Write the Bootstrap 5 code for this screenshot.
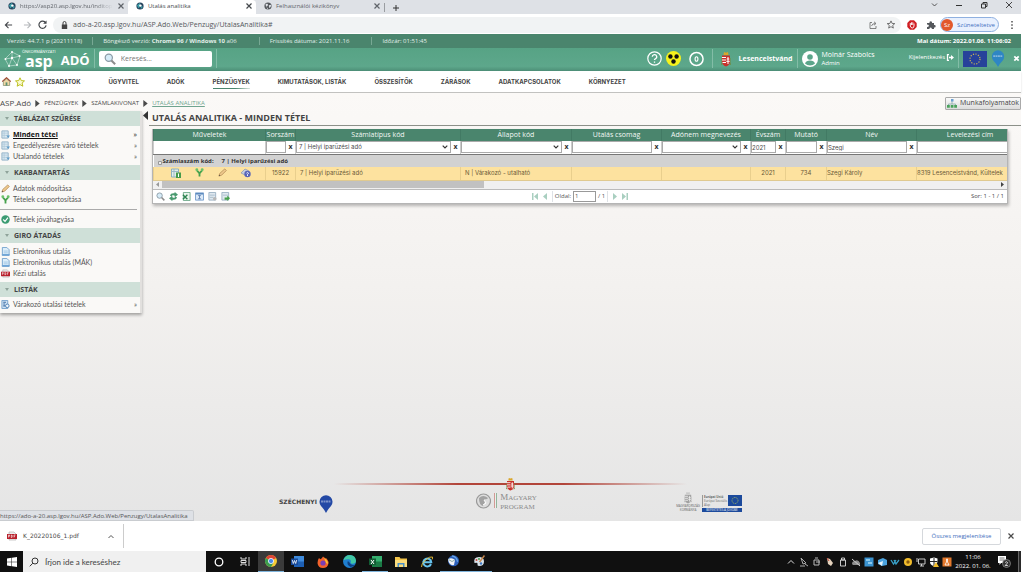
<!DOCTYPE html>
<html lang="hu">
<head>
<meta charset="utf-8">
<meta name="viewport" content="width=device-width, initial-scale=1">
<title>Utalás analitika</title>
<link href="https://cdn.jsdelivr.net/npm/bootstrap@5.3.0/dist/css/bootstrap.min.css" rel="stylesheet">
<script src="https://cdn.jsdelivr.net/npm/bootstrap@5.3.0/dist/js/bootstrap.bundle.min.js" defer></script>
<style>
body{font:6px/8px "Open Sans","Noto Sans",sans-serif;color:#4a4a4a;min-height:100vh;padding:0 3px 4px 0;background:#fff}
a{color:inherit;text-decoration:none}
button{border:0;background:none;padding:0;color:inherit;font:inherit;display:inline-flex;align-items:center;justify-content:center}
input,select{font:inherit;color:inherit;min-width:0;border-radius:0}
svg{display:block;flex:none}
.fs-7px{font-size:7px}
.fs-8px{font-size:8px}
/* browser chrome */
.tabstrip{height:14px;background:#dee1e6;padding-right:8px}
.brtab{width:128px;height:14px;padding:0 3px 3px 8px;color:#60646a;gap:4px}
.brtab .ttl{flex:1;white-space:nowrap}
.brtab.on{background:#fff;color:#45494d;border-radius:4px 4px 0 0}
.fade-end{-webkit-mask-image:linear-gradient(90deg,#000 80%,transparent)}
.newtab{border-left:1px solid #9a9da1;height:9px;width:23px;margin-top:1px}
.winbtns{gap:17px;padding-bottom:5px}
.toolbar-row{height:20px;padding:1px 6px 0 4px;gap:6px}
.omni{background:#f1f3f4;height:16px;border-radius:8px;padding:0 5px 0 8px;gap:5px}
.omni input{border:0;background:none;font-size:7px;padding:0;outline:0;color:#55585c}
.profile{border:1px solid #8fb0e0;background:#e8f0fe;border-radius:8px;height:15px;width:59px;color:#3f6fbe;gap:4px;padding-right:3px;margin-left:-2px}
.profile .av{width:12px;height:12px;border-radius:50%;background:#e2582c;color:#fff;line-height:12px}
/* application header */
.verbar{height:14px;background:#4a856d;color:#e2eee9;padding:0 10px 0 7px}
.verbar span+span{border-left:1px solid #78a894;margin-left:22px;padding-left:10px}
.verbar span:first-child{margin-right:-12px}
.brandbar{height:23px;background:linear-gradient(#57a385,#5da78b 80%,#4d8f77);color:#fff;padding:0 1px 2px 4px}
.vr-line{border-left:1px solid #83bda7;height:19px}
.logo-asp{font-weight:700;font-size:16px;line-height:14px}
.logo-asp small{display:block;font:4px/4px "Open Sans",sans-serif;margin-left:-3px;width:30px;white-space:nowrap}
.logo-ado{font-weight:700;font-size:13px;line-height:15px;padding-top:3px}
.srch{background:#fff;width:113px;height:16px;border-radius:2px;padding-left:5px;gap:5px}
.srch input{border:0;outline:0;padding:0;font-size:7px;width:80px}
input::placeholder{color:#777}
.logout{gap:1px;margin:5px 0 0 34px}
.menubar{height:22px;background:#fff;border-bottom:1px solid #c2c2c0;box-shadow:0 1px 2px #0002;position:relative;font:700 6px/8px Inter,"Open Sans",sans-serif;color:#444;padding:0 2px;gap:28px}
.menubar a{line-height:14px;padding-top:1px}
.menubar a.cur{background:linear-gradient(90deg,#4a856d,#4a856d 60%,#4a856d33) bottom/100% 1px no-repeat}
.quick{margin-right:-18px}
.zone{background:linear-gradient(#fbf9f7,#f3f1ef 45%,#e5e5e5);min-height:300px}
.crumbs{height:18px;padding-top:2px;gap:4px}
.crumbs .here{color:#6fa48f;text-decoration:underline}
.wf-btn{border:1px solid #aaa;background:linear-gradient(#fafafa,#dcdcdc);border-radius:1px;height:13px;width:76px;font-size:7px;color:#444;gap:3px}
/* side menu */
.side{width:142px;background:#faf9f7;border-right:2px solid #e2e0de;box-shadow:0 2px 3px #0005;padding-bottom:2px}
.side h2{font-size:7px;line-height:15px;font-weight:700;margin:0;background:#cfe0d8;padding-left:14px;position:relative;color:#444}
.side h2::before{content:"";position:absolute;left:5px;top:6px;border:2px solid transparent;border-top:3px solid #8fa39a}
.side ul{list-style:none;margin:0;padding:3px 0}
.side li a{display:flex;align-items:center;height:11px;gap:3px;padding:0 3px 0 1px;font:7px/11px Lato,sans-serif;color:#555}
.side li i{margin-left:auto;font-style:normal;font-weight:400}
.side li.sel a{font:700 7px/11px "Open Sans",sans-serif;color:#111}
.side hr{margin:4px 3px 4px 0;border-top:1px solid #aaa;opacity:1}
.side ul:last-child{padding:2px 0 1px}
.side-toggle{width:7px;flex:none}
.ptitle{font-size:9px;line-height:14px;font-weight:700;border-bottom:1px solid #8c9089;margin:0;padding-left:3px;color:#444}
/* data grid */
.gridbox{margin:3px 13px 0 3px;border:1px solid #b5b5b5;border-width:0 1px 1px;box-shadow:1px 2px 3px #0004;background:#fff}
.datagrid{table-layout:fixed;width:100%;border-collapse:collapse;font-family:Inter,"Open Sans",sans-serif}
.datagrid th,.datagrid td{padding:0;white-space:nowrap;overflow:hidden}
.datagrid thead th{background:#4a856d;color:#f3f8f5;font:7px/12px "Open Sans",sans-serif;text-align:center;border-left:1px solid #427a64}
.c-ops{width:112px}.c-seq{width:30px}.c-type{width:165px}.c-state{width:111px}.c-pack{width:90px}.c-tax{width:89px}.c-year{width:35px}.c-idx{width:41px}.c-name{width:90px}
.filters td{height:13px;border-left:1px solid #ccc;border-bottom:1px solid #777}
.filters input,.filters select{flex:1;height:12px;border:1px solid #aaa;padding:0 2px;background-color:#fff;width:10px;outline:0}
.filters input{padding:0}
.filters select{appearance:none;background:#fff url("data:image/svg+xml,%3Csvg xmlns='http://www.w3.org/2000/svg' viewBox='0 0 6 4'%3E%3Cpath d='M.7.7 3 3 5.300.7' fill='none' stroke='%23333' stroke-width='1.200'/%3E%3C/svg%3E") right 2px center/6px 4px no-repeat}
.filters button{width:9px;font:700 7px/10px "Open Sans",sans-serif;color:#333}
.grp td{background:#d2d2d2;height:13px;font:700 6px/12px "Open Sans",sans-serif;padding-left:9px;color:#333}
.rowsel td{background:#fde29f;height:13px;border-left:1px solid #e9cf8d;border-bottom:1px solid #e0ca90;color:#6b5a38}
.rowact{gap:14px;padding-left:17px}
.hscroll{height:9px;background:#f0f0f0;padding:1px 3px;border-bottom:1px solid #bbb;gap:3px}
.hscroll div{background:#c1c1c1;height:7px}
.pager{display:grid;grid-template-columns:1fr auto 1fr;align-items:center;height:13px;padding:0 3px}
.pager input{width:23px;height:11px;border:1px solid #999;padding:0 1px}
.pager-nav{gap:5px;color:#555}
.pager-nav label{gap:2px;padding:0 2px}
/* page footer */
.foot-in{width:463px;max-width:100%;height:32px;padding-top:2px}
.tri-line{height:2px;width:353px;background:linear-gradient(90deg,transparent,#b2453a 35%,#b2453a 65%,transparent)}
.szechenyi{gap:2px;font:700 6px/8px "DejaVu Sans",sans-serif;color:#444}
.magyary{gap:3px;color:#8b8b8b;padding:2px 0 0 4px;font:9px/8px "Liberation Serif",serif}
.magyary i{width:3px;height:15px;background:linear-gradient(90deg,#d29a94 33%,#eee 33% 66%,#93b59b 66%)}
.eufund{gap:2px;font:3px/4px "Open Sans",sans-serif;color:#666}
.eufund .aid{border-left:1px solid #999;padding-left:1px;white-space:nowrap;width:24px}
.eufund .motto{background:#1c4a9c;color:#fff;text-align:center;width:40px;margin-top:1px}
.statusurl{position:absolute;left:0;bottom:0;background:#dee1e6;border:1px solid #c9ccd0;border-left:0;border-radius:0 2px 0 0;height:11px;padding-right:5px;color:#555;line-height:10px}
/* download bar and taskbar */
.dlbar{height:30px;background:#fff;padding-right:6px;gap:6px}
.dlitem{width:124px;height:24px;border-right:1px solid #ccc;padding:0 9px 0 7px;gap:6px;font-family:"DejaVu Sans",sans-serif}
.showall{border:1px solid #d5d8dc;border-radius:2px;width:79px;height:17px;color:#3f6fbe}
.taskbar{height:21px;background:#101010;color:#fff}
.start{width:23px}
.tsearch{background:#f0f0f0;width:183px;height:21px;padding-left:6px;gap:6px;color:#444}
.tsearch input{border:0;background:none;outline:0;font:8px/10px Lato,sans-serif;padding:0;flex:1}
.tsearch input::placeholder{color:#444}
.tapp{width:26px;height:21px}
.tapp.run{border-bottom:1px solid #7fb4dc}
.tapp.act{background:#3a3a3a;border-bottom:1px solid #7fb4dc}
.tray{gap:3px}
.clock{width:42px;text-align:center;line-height:9px}
.notif{width:20px;margin-right:4px}
.peek{width:3px;height:21px;background:#2a2a2a;border-left:1px solid #666}
</style>
</head>
<body class="d-flex flex-column">
<svg width="0" height="0" class="position-absolute" aria-hidden="true">
<symbol id="x" viewBox="0 0 8 8"><path d="M1.500 1.500l5 5m0-5l-5 5" stroke="currentColor" stroke-width="1.200"/></symbol>
<symbol id="fav" viewBox="0 0 10 10"><circle cx="5" cy="5" r="4.500" fill="#27425c"/><path d="M1 4l4-3 1 4-3 3zM6 5l3 1-3 3" fill="#3a9aa5"/><circle cx="5.500" cy="4.500" r="1.500" fill="#fff"/></symbol>
<symbol id="globe" viewBox="0 0 10 10"><circle cx="5" cy="5" r="4.500" fill="#55595e"/><path d="M2 2.500q3-1 3 1T2.500 6zM6 4l3-.5q0 3-2.500 4zM3 7l2 .5v1.500" fill="#dee1e6"/></symbol>
<symbol id="crest" viewBox="0 0 10 16"><path d="M2.500 4L3 1l2 .8L7 1l.5 3z" fill="#d9a62b"/><path d="M1 4.500h8v6q0 3.500-4 5-4-1.500-4-5z" fill="#c8312b"/><path d="M1 6.500h4M1 9h4M1.500 11.500H5" stroke="#fff"/><path d="M7 6v7M5.700 8h2.600M5.300 10.300h3.400" stroke="#fff"/><path d="M0 7v5l1 2M10 7v5l-1 2" stroke="#6f8a42" fill="none"/></symbol>
<symbol id="pin" viewBox="0 0 14 18"><path d="M7 18Q5 14 2 11A6.500 6.500 0 1 1 12 11Q9 14 7 18z"/><path d="M2 6.500h10" stroke="#fff" stroke-width="2" stroke-dasharray="2 .5" opacity=".4"/></symbol>
<symbol id="eu" viewBox="0 0 24 16"><path d="M0 0h24v16H0z" fill="#27429a"/><circle cx="12" cy="8" r="5" fill="none" stroke="#c9b854" stroke-width="1.200" stroke-dasharray="1.200 1.400"/></symbol>
<symbol id="sheet" viewBox="0 0 10 10"><path d="M1 1h7v8H1z" fill="#d9e8f2" stroke="#8fb0c6"/><path d="M1 3.500h7M1 6h7M3.500 1v8" stroke="#a9c4d6" stroke-width=".7"/><path d="M6 6h4L8 9z" fill="#5f9bc8"/></symbol>
<symbol id="doc" viewBox="0 0 10 10"><path d="M1.500.500h5l2.500 2.500v6.500h-7.500z" fill="#dceefa" stroke="#6f9fcc"/><path d="M3 4.500h4.500M3 6.500h4.500" stroke="#9dc4e4"/><path d="M1 8.500h8.500" stroke="#6fa6d8" stroke-width="1.500"/></symbol>
<symbol id="pen" viewBox="0 0 10 10"><path d="M1 9l1-3L7.500 1 9.200 2.800 4 8z" fill="#efc98c" stroke="#ae8450" stroke-width=".8"/><path d="M1 9l.5-1.500 1 1z" fill="#444"/></symbol>
<symbol id="fork" viewBox="0 0 10 10"><path d="M5 9.500V6M5 6L2 2.500M5 6l3-3.500" stroke="#45a04c" stroke-width="2" fill="none"/><circle cx="2" cy="2" r="1.600" fill="#6cc36c"/><circle cx="8" cy="2" r="1.600" fill="#6cc36c"/></symbol>
<symbol id="pdf" viewBox="0 0 10 10"><path d="M2 1h5l2 2v6H2z" fill="#eee" stroke="#aaa" stroke-width=".6"/><path d="M0 3h10v5H0z" fill="#b8202c"/><path d="M1.500 6.500V4h1v1.300h-1M4.300 4v2.500h.6q.8-1.200 0-2.500zM7 6.500V4h1.500M7 5.300h1" stroke="#fff" stroke-width=".6" fill="none"/></symbol>
<symbol id="lens" viewBox="0 0 10 10"><circle cx="4" cy="4" r="3" fill="#d6ebf7" stroke="#8a9aa5"/><path d="M6.200 6.200L9.300 9.300" stroke="#8d8d8d" stroke-width="1.700"/></symbol>
<symbol id="tri" viewBox="0 0 5 8"><path d="M0 0l5 4-5 4z" fill="currentColor"/></symbol>
</svg>

<div class="tabstrip d-flex align-items-center">
 <div class="brtab d-flex align-items-center"><svg width="8" height="8"><use href="#fav"/></svg><span class="ttl fade-end">https://asp20.asp.lgov.hu/inditop</span><button aria-label="Bezárás"><svg width="8" height="8"><use href="#x"/></svg></button></div>
 <div class="brtab on d-flex align-items-center"><svg width="8" height="8"><use href="#fav"/></svg><span class="ttl">Utalás analitika</span><button aria-label="Bezárás"><svg width="8" height="8"><use href="#x"/></svg></button></div>
 <div class="brtab d-flex align-items-center"><svg width="8" height="8"><use href="#globe"/></svg><span class="ttl">Felhasználói kézikönyv</span><button aria-label="Bezárás"><svg width="8" height="8"><use href="#x"/></svg></button></div>
 <button class="newtab" aria-label="Új lap"><svg width="8" height="8" viewBox="0 0 8 8"><path d="M4 1v6M1 4h6" stroke="#333"/></svg></button>
 <div class="winbtns d-flex ms-auto">
  <svg width="7" height="8" viewBox="0 0 7 8"><path d="M1 2.500l2.500 2.500L6 2.500" fill="none" stroke="#444" stroke-width=".9"/></svg>
  <svg width="8" height="8" viewBox="0 0 8 8"><path d="M1 4.500h6" stroke="#333"/></svg>
  <svg width="8" height="8" viewBox="0 0 8 8"><path d="M1.500 3h4v4h-4zM3 3V1.500h4v4H5.500" fill="none" stroke="#333"/></svg>
  <svg width="8" height="8" viewBox="0 0 8 8"><path d="M1 1l6 6m0-6L1 7" stroke="#333" stroke-width=".9"/></svg>
 </div>
</div>

<div class="toolbar-row d-flex align-items-center">
 <button class="me-1" aria-label="Vissza"><svg width="9" height="10" viewBox="0 0 10 10"><path d="M9 5H1.500M5 1.500L1.500 5 5 8.500" stroke="#44474b" stroke-width="1.200" fill="none"/></svg></button>
 <button aria-label="Előre"><svg width="9" height="10" viewBox="0 0 10 10"><path d="M1 5h7.500M5 1.500L8.500 5 5 8.500" stroke="#b5b8bb" stroke-width="1.200" fill="none"/></svg></button>
 <button aria-label="Frissítés"><svg width="9" height="9" viewBox="0 0 10 10"><path d="M8.500 3.200A4 4 0 1 0 9 6" stroke="#44474b" stroke-width="1.300" fill="none"/><path d="M9.500.500v3.800H5.700z" fill="#44474b"/></svg></button>
 <div class="omni d-flex align-items-center flex-grow-1"><svg width="7" height="8" viewBox="0 0 7 8"><path d="M.8 3.500h5.400V8H.8z" fill="#444"/><path d="M2 4V2a1.500 1.500 0 0 1 3 0v2" fill="none" stroke="#444"/></svg>
 <input class="flex-grow-1" aria-label="Cím" value="ado-a-20.asp.lgov.hu/ASP.Ado.Web/Penzugy/UtalasAnalitika#">
 <svg class="me-1" width="8" height="8" viewBox="0 0 8 8"><path d="M3 1.500H1v6h6V5M2.500 5q.5-2.500 4-2.500M5 .8l2 1.700-2 1.700" stroke="#666" stroke-width=".8" fill="none"/></svg>
 <svg width="10" height="9" viewBox="0 0 10 10"><path d="M5 1l1.200 2.800 3 .2-2.300 2 .7 3L5 7.400 2.400 9l.7-3L.8 4l3-.2z" fill="none" stroke="#555" stroke-width=".9"/></svg></div>
 <svg class="me-1" width="10" height="10" viewBox="0 0 10 10"><path d="M3 .300h4l2.700 2.700v4L7 9.700H3L.3 7V3z" fill="#d01f24"/><path d="M3.300 3v3q.5 2 2 2T7 6V3.500M4.500 2.300V5M5.800 2.300V5" stroke="#fff" stroke-width=".9" fill="none"/></svg>
 <svg width="9" height="9" viewBox="0 0 9 9"><path d="M0 3h2.500a1.300 1.300 0 1 1 2.500 0H7v2a1.300 1.300 0 1 1 0 2.500V9H4.800a1.200 1.200 0 1 0-2.300 0H0V6.800a1.200 1.200 0 1 0 0-2z" fill="#55585c"/></svg>
 <button class="profile me-1"><span class="av">Sz</span>Szüneteltetve</button>
 <svg width="6" height="10" viewBox="0 0 4 10"><path d="M2 1v1.500M2 4.300v1.500M2 7.600v1.500" stroke="#444" stroke-width="1.400"/></svg>
</div>

<header>
 <div class="verbar d-flex align-items-center"><span>Verzió: 44.7.1 p (20211118)</span><span>Böngésző verzió: <b>Chrome 96 / Windows 10</b> a06</span><span>Frissítés dátuma: 2021.11.16</span><span>Időzár: 01:51:45</span><b class="ms-auto text-white">Mai dátum: 2022.01.06. 11:06:02</b></div>
 <div class="brandbar d-flex align-items-center">
  <svg class="me-1" width="17" height="18" viewBox="0 0 17 18"><path d="M1 9l7-7 8 4-3 9-8 1zM1 9l7-1 8-2M8 2v6l5 7M8 8l-3 8" stroke="#d4eae1" stroke-width=".6" fill="none"/><g fill="#fff"><circle cx="1.500" cy="9" r="1"/><circle cx="8" cy="2" r="1"/><circle cx="8" cy="8" r="1.200"/><circle cx="15.500" cy="6" r="1"/><circle cx="13" cy="15" r="1"/><circle cx="5" cy="16" r="1"/></g></svg>
  <span class="logo-asp me-2"><small>ÖNKORMÁNYZATI</small>asp</span><span class="logo-ado">ADÓ</span>
  <span class="vr-line ms-1 me-1"></span>
  <label class="srch d-flex align-items-center"><svg width="12" height="12"><use href="#lens"/></svg><input placeholder="Keresés..." aria-label="Keresés"></label>
  <span class="vr-line ms-1"></span>
  <svg class="ms-auto me-1" width="15" height="15" viewBox="0 0 15 15"><circle cx="7.500" cy="7.500" r="6.700" fill="none" stroke="#fff" stroke-width="1.200"/><path d="M5.300 5.800a2.200 2.200 0 1 1 3 2q-.8.400-.8 1.300M7.500 10.500v1.300" fill="none" stroke="#fff" stroke-width="1.300"/></svg>
  <svg class="me-2" width="15" height="15" viewBox="0 0 15 15"><circle cx="7.500" cy="7.500" r="7.500" fill="#f6f21c"/><g fill="#111"><circle cx="4.400" cy="5.500" r="2.200"/><circle cx="10.600" cy="5.500" r="2.200"/><circle cx="7.500" cy="10.500" r="2.200"/></g></svg>
  <svg width="15" height="16" viewBox="0 0 16 16"><circle cx="8" cy="8" r="7" fill="none" stroke="#fff" stroke-width="1.600"/><ellipse cx="8" cy="8" rx="1.500" ry="2.400" fill="none" stroke="#fff" stroke-width="1.200"/></svg>
  <span class="vr-line ms-2 me-2"></span>
  <svg width="10" height="16"><use href="#crest"/></svg><b class="ms-2 fs-7px">Lesenceistvánd</b>
  <span class="vr-line ms-1 me-1"></span>
  <svg class="me-1" width="16" height="16" viewBox="0 0 16 16"><circle cx="8" cy="8" r="8" fill="#fff"/><circle cx="8" cy="6" r="2.800" fill="#5ba58a"/><path d="M3 12.500q1-3 5-3t5 3A7 7 0 0 1 3 12.500" fill="#5ba58a"/></svg>
  <span><span class="d-block fs-7px">Molnár Szabolcs</span><span class="d-block">Admin</span></span>
  <a href="#" class="logout d-flex align-items-center align-self-start">Kijelentkezés<svg width="8" height="7" viewBox="0 0 8 7"><path d="M3 .500H1.500v6H3M3 3.500h3.500" stroke="#fff" fill="none" stroke-width="1.300"/><path d="M5 1l3 2.500-3 2.500z" fill="#fff"/></svg></a>
  <span class="vr-line ms-1 me-1"></span>
  <svg width="24" height="16"><use href="#eu"/></svg>
  <svg class="ms-1 me-2" width="14" height="17" fill="#2e86c4"><use href="#pin"/></svg>
  <button aria-label="Bezárás"><svg width="7" height="7" viewBox="0 0 8 8"><path d="M1.500 1.500l5 5m0-5l-5 5" stroke="#fff" stroke-width="2"/></svg></button>
 </div>
 <nav class="menubar d-flex align-items-center">
  <span class="quick d-flex gap-1"><svg width="9" height="9" viewBox="0 0 10 10"><path d="M1.500 5v4.500h7V5L5 2z" fill="#f0d7a5" stroke="#7f8a68" stroke-width=".8"/><path d="M0 5.200L5 .8l5 4.400" fill="none" stroke="#a34c35" stroke-width="1.300"/><path d="M4 6h2v3.500H4z" fill="#5c9072"/></svg><svg width="10" height="10" viewBox="0 0 10 10"><path d="M5 .800l1.300 2.800 3.200.3-2.400 2.100.7 3.200L5 7.600 2.200 9.200l.7-3.200L.5 3.900l3.200-.3z" fill="#fbfad0" stroke="#bcc021"/></svg></span>
  <a href="#">TÖRZSADATOK</a><a href="#">ÜGYVITEL</a><a href="#">ADÓK</a><a href="#" class="cur">PÉNZÜGYEK</a><a href="#">KIMUTATÁSOK, LISTÁK</a><a href="#">ÖSSZESÍTŐK</a><a href="#">ZÁRÁSOK</a><a href="#">ADATKAPCSOLATOK</a><a href="#">KÖRNYEZET</a>
 </nav>
</header>

<div class="zone flex-grow-1 d-flex flex-column position-relative">
 <div class="crumbs d-flex align-items-center">
  <a href="#" class="fs-8px">ASP.Adó</a><svg width="5" height="7"><use href="#tri"/></svg><a href="#">PÉNZÜGYEK</a><svg width="5" height="7"><use href="#tri"/></svg><a href="#">SZÁMLAKIVONAT</a><svg width="5" height="7"><use href="#tri"/></svg><a href="#" class="here">UTALÁS ANALITIKA</a>
  <button class="wf-btn ms-auto"><svg width="10" height="9" viewBox="0 0 10 9"><path d="M5 2v3M1.500 7V5h7v2" stroke="#8aa" fill="none" stroke-width=".8"/><path d="M4 0h2.500v2.500H4z" fill="#6a9fd0"/><path d="M0 6h2.800v2.800H0zM3.700 6h2.800v2.800H3.700zM7.200 6H10v2.800H7.200z" fill="#49a25b"/></svg>Munkafolyamatok</button>
 </div>
 <div class="d-flex align-items-start">
  <aside class="side flex-shrink-0">
   <h2>TÁBLÁZAT SZŰRÉSE</h2>
   <ul><li class="sel"><a href="#"><svg width="9" height="9"><use href="#sheet"/></svg><u>Minden tétel</u><i>»</i></a></li><li><a href="#"><svg width="9" height="9"><use href="#sheet"/></svg>Engedélyezésre váró tételek<i>»</i></a></li><li><a href="#"><svg width="9" height="9"><use href="#sheet"/></svg>Utalandó tételek<i>»</i></a></li></ul>
   <h2>KARBANTARTÁS</h2>
   <ul><li><a href="#"><svg width="9" height="9"><use href="#pen"/></svg>Adatok módosítása</a></li><li><a href="#"><svg width="9" height="9"><use href="#fork"/></svg>Tételek csoportosítása</a></li><li><hr></li><li><a href="#"><svg width="9" height="9" viewBox="0 0 10 10"><circle cx="5" cy="5" r="4.700" fill="#3c9b72"/><path d="M2.500 5l2 2 3.200-4" stroke="#fff" stroke-width="1.300" fill="none"/></svg>Tételek jóváhagyása</a></li></ul>
   <h2>GIRO ÁTADÁS</h2>
   <ul><li><a href="#"><svg width="9" height="9"><use href="#doc"/></svg>Elektronikus utalás</a></li><li><a href="#"><svg width="9" height="9"><use href="#doc"/></svg>Elektronikus utalás (MÁK)</a></li><li><a href="#"><svg width="9" height="9"><use href="#pdf"/></svg>Kézi utalás</a></li></ul>
   <h2>LISTÁK</h2>
   <ul><li><a href="#"><svg width="9" height="9" viewBox="0 0 10 10"><path d="M1 .500h6.500v9H1z" fill="#cfe1f2" stroke="#6f9fcc"/><path d="M2.500 2.500h3M2.500 4.500h2M2.500 6.500h2" stroke="#3c6ea5" stroke-width="1.200"/><circle cx="7" cy="6.500" r="2" fill="#eef6fc" stroke="#4b7db2"/></svg>Várakozó utalási tételek<i>»</i></a></li></ul>
  </aside>
  <button class="side-toggle" aria-label="Menü elrejtése"><svg width="5" height="9" viewBox="0 0 5 9"><path d="M5 0v9L0 4.500z" fill="#333"/></svg></button>
  <main class="flex-grow-1" style="min-width:0">
   <h1 class="ptitle">UTALÁS ANALITIKA - MINDEN TÉTEL</h1>
   <div class="gridbox">
    <table class="datagrid">
     <colgroup><col class="c-ops"><col class="c-seq"><col class="c-type"><col class="c-state"><col class="c-pack"><col class="c-tax"><col class="c-year"><col class="c-idx"><col class="c-name"><col></colgroup>
     <thead><tr><th>Műveletek</th><th>Sorszám</th><th>Számlatípus kód</th><th>Állapot kód</th><th>Utalás csomag</th><th>Adónem megnevezés</th><th>Évszám</th><th>Mutató</th><th>Név</th><th class="ps-3">Levelezési cím</th></tr></thead>
     <tbody>
      <tr class="filters"><td></td>
       <td><div class="d-flex"><input aria-label="Sorszám"><button>x</button></div></td>
       <td><div class="d-flex"><select aria-label="Számlatípus kód"><option>7 | Helyi iparűzési adó</option></select><button>x</button></div></td>
       <td><div class="d-flex"><select aria-label="Állapot kód"><option></option></select><button>x</button></div></td>
       <td><div class="d-flex"><input aria-label="Utalás csomag"><button>x</button></div></td>
       <td><div class="d-flex"><select aria-label="Adónem megnevezés"><option></option></select><button>x</button></div></td>
       <td><div class="d-flex"><input aria-label="Évszám" value="2021"><button>x</button></div></td>
       <td><div class="d-flex"><input aria-label="Mutató"><button>x</button></div></td>
       <td><div class="d-flex"><input aria-label="Név" value="Szegi"><button>x</button></div></td>
       <td><div class="d-flex"><input aria-label="Levelezési cím" class="border-end-0"></div></td></tr>
      <tr class="grp"><td colspan="10" class="position-relative">Számlaszám kód: &nbsp; &nbsp; 7 | Helyi iparűzési adó<svg class="position-absolute top-50 start-0 ms-1" width="4" height="4" viewBox="0 0 4 4"><path d="M.5.500h3v3h-3z" fill="#eee" stroke="#999"/></svg></td></tr>
      <tr class="rowsel"><td><div class="rowact d-flex"><svg width="10" height="10" viewBox="0 0 10 10"><path d="M.5 1h7v8h-7z" fill="#e2efe8" stroke="#8bb0c0"/><path d="M.5 3.500h7M3 1v8" stroke="#9bb8c8"/><path d="M5 4.500h5V10H5z" fill="#459b4a"/><path d="M7.500 5.500v3.500" stroke="#fff"/></svg><svg width="9" height="9"><use href="#fork"/></svg><svg width="9" height="9"><use href="#pen"/></svg><svg width="10" height="10" viewBox="0 0 10 10"><path d="M0 5l4-4 4 2-4 4z" fill="#c9cfdf" stroke="#8794b0" stroke-width=".7"/><circle cx="6.500" cy="6" r="3.200" fill="#5864b8"/><path d="M5.500 5.200q1-1.500 2 0L6.500 6.500v1.500" stroke="#fff" fill="none" stroke-width=".9"/></svg></div></td>
       <td class="text-center">15922</td><td class="ps-1">7 | Helyi iparűzési adó</td><td class="ps-1">N | Várakozó - utalható</td><td></td><td></td><td class="text-center">2021</td><td class="text-center">734</td><td>Szegi Károly</td><td>8319 Lesenceistvánd, Kültelek</td></tr>
     </tbody>
    </table>
    <div class="hscroll d-flex align-items-center"><svg width="3" height="5" viewBox="0 0 5 8"><path d="M5 0v8L0 4z" fill="#999"/></svg><div style="width:38%"></div><svg class="ms-auto" width="3" height="5" viewBox="0 0 5 8"><path d="M0 0l5 4-5 4z" fill="#444"/></svg></div>
    <div class="pager">
     <div class="d-flex gap-1">
      <svg width="9" height="9"><use href="#lens"/></svg>
      <svg width="9" height="9" viewBox="0 0 10 10"><path d="M1 4q1-3 5-2.500L6.500 0 10 3 6.500 5.500 6 3.800Q3 3 3 5zM9 6q-1 3-5 2.500L3.500 10 0 7l3.500-2.500L4 6.200Q7 7 7 5z" fill="#4a9a70"/></svg>
      <svg width="9" height="9" viewBox="0 0 10 10"><path d="M1.500.500h7.500v9H1.500z" fill="#e9f5ec" stroke="#6ba888"/><path d="M1 3l5 5M6 3L1 8" stroke="#2d8350" stroke-width="1.500"/></svg>
      <svg width="9" height="9" viewBox="0 0 10 10"><path d="M.5 1h9v8h-9z" fill="#dbe9f7" stroke="#6f98c8"/><path d="M1 2h8" stroke="#4f80b8" stroke-width="1.500"/><path d="M5 4v3.500M3.500 4h3M3.500 7.500h3" stroke="#5b7eb0"/></svg>
      <svg width="9" height="9" viewBox="0 0 10 10"><path d="M1 .500h7.500v8.500H1z" fill="#dfe8ef" stroke="#9ab0c2"/><path d="M2 3.500h5.500M2 6h4" stroke="#a9bccb"/><circle cx="7.500" cy="7.500" r="2" fill="#b8b8b8"/></svg>
      <svg width="9" height="9" viewBox="0 0 10 10"><path d="M1 .500h7.500v8.500H1z" fill="#dfe8ef" stroke="#9ab0c2"/><path d="M2 3.500h5.500" stroke="#a9bccb"/><path d="M4 6h3V4l3 3-3 3V8.500H4z" fill="#45a04c"/></svg>
     </div>
     <div class="pager-nav d-flex align-items-center">
      <button aria-label="Első"><svg width="6" height="7" viewBox="0 0 6 7"><path d="M6 0v7L2 3.500zM0 0h1.500v7H0z" fill="#a9cfc0"/></svg></button>
      <button aria-label="Előző"><svg width="4" height="7" viewBox="0 0 4 7"><path d="M4 0v7L0 3.500z" fill="#a9cfc0"/></svg></button>
      <label class="d-flex align-items-center border-start border-end">Oldal:<input value="1">/ 1</label>
      <button aria-label="Következő"><svg width="4" height="7" viewBox="0 0 4 7"><path d="M0 0v7l4-3.500z" fill="#a9cfc0"/></svg></button>
      <button aria-label="Utolsó"><svg width="6" height="7" viewBox="0 0 6 7"><path d="M0 0v7l4-3.500zM4.500 0H6v7H4.500z" fill="#a9cfc0"/></svg></button>
     </div>
     <div class="text-end">Sor: 1 - 1 / 1</div>
    </div>
   </div>
  </main>
 </div>
 <footer class="mt-auto d-flex flex-column align-items-center">
  <div class="d-flex align-items-center justify-content-center"><div class="tri-line"></div><svg class="position-absolute" width="9" height="14"><use href="#crest"/></svg></div>
  <div class="foot-in mt-1 d-flex justify-content-between">
   <div class="szechenyi d-flex align-items-center pb-2"><span>SZÉCHENYI</span><svg class="align-self-end" width="14" height="18" fill="#2349a5"><use href="#pin"/></svg></div>
   <div class="magyary d-flex"><svg width="15" height="16" viewBox="0 0 15 16"><circle cx="7.500" cy="8" r="7" fill="#ddd" stroke="#999" stroke-width="1.200"/><path d="M3 5q4-4 9 0-1 2-4 1l1 3-2 4Q3 12 3 5z" fill="#a2a2a2"/><path d="M8 7l2 3-3 2" fill="none" stroke="#fff"/></svg><i></i><span>M<span class="fs-7px">AGYARY<br>PROGRAM</span></span></div>
   <div class="eufund d-flex"><div class="text-center"><svg class="mx-auto" width="8" height="13" style="filter:grayscale(1);opacity:.45"><use href="#crest"/></svg>MAGYARORSZÁG<br>KORMÁNYA</div><div><div class="d-flex justify-content-between pt-1"><span class="aid"><b>Európai Unió</b><br>Európai Szociális<br>Alap</span><svg width="14" height="11" viewBox="0 0 14 11"><path d="M0 0h14v11H0z" fill="#1c4a9c"/><circle cx="7" cy="5.500" r="3" fill="none" stroke="#9fb565" stroke-dasharray="1 .8"/></svg></div><div class="motto">BEFEKTETÉS A JÖVŐBE</div></div></div>
  </div>
 </footer>
 <div class="statusurl">https://ado-a-20.asp.lgov.hu/ASP.Ado.Web/Penzugy/UtalasAnalitika</div>
</div>

<div class="dlbar d-flex align-items-center">
 <div class="dlitem d-flex align-items-center"><svg width="10" height="10" viewBox="0 0 10 10"><use href="#pdf"/></svg><span>K_20220106_1.pdf</span><button class="ms-auto" aria-label="Beállítások"><svg width="6" height="5" viewBox="0 0 6 5"><path d="M.5 4L3 1.500 5.500 4" fill="none" stroke="#555"/></svg></button></div>
 <button class="showall ms-auto">Összes megjelenítése</button><button aria-label="Bezárás"><svg width="8" height="8"><use href="#x"/></svg></button>
</div>

<div class="taskbar d-flex align-items-center">
 <button class="start" aria-label="Start"><svg width="10" height="10" viewBox="0 0 10 10"><path d="M0 1.500l4.500-.7v3.900H0zM5 .700L10 0v4.700H5zM0 5.200h4.500v4L0 8.500zM5 5.200h5V10l-5-.8z" fill="#fff"/></svg></button>
 <label class="tsearch d-flex align-items-center"><svg width="10" height="10" viewBox="0 0 10 10"><circle cx="6" cy="4" r="3" fill="none" stroke="#333"/><path d="M3.800 6.200L.8 9.300" stroke="#333"/></svg><input placeholder="Írjon ide a kereséshez" aria-label="Keresés"></label>
 <button class="tapp" aria-label="Cortana"><svg width="10" height="10" viewBox="0 0 10 10"><circle cx="5" cy="5" r="3.800" fill="none" stroke="#fff" stroke-width="1.300"/></svg></button>
 <button class="tapp" aria-label="Feladatnézet"><svg width="10" height="9" viewBox="0 0 10 9"><path d="M1 0v2h5V0M1 9V7h5v2M1 3.500h5v2H1zM9 0v9" fill="none" stroke="#ddd"/></svg></button>
 <button class="tapp act" aria-label="Chrome"><svg width="12" height="12" viewBox="0 0 12 12"><circle cx="6" cy="6" r="6" fill="#f6c934"/><path d="M6 6L.8 3A6 6 0 0 1 11.200 3z" fill="#de4436"/><path d="M6 6L.8 3A6 6 0 0 0 6 12l2-3.500z" fill="#3c9c50"/><circle cx="6" cy="6" r="2.600" fill="#4a87e8" stroke="#fff" stroke-width=".8"/></svg></button>
 <button class="tapp" aria-label="Word"><svg width="13" height="11" viewBox="0 0 13 11"><path d="M3 0h10v11H3z" fill="#3f8bdc"/><path d="M3 5.500h10V11H3z" fill="#1d5fb4"/><path d="M0 2.500h7v6.500H0z" fill="#184a9a"/><path d="M1.300 4l1 3.500L3.500 4.500l1.200 3L5.700 4" stroke="#fff" stroke-width=".8" fill="none"/></svg></button>
 <button class="tapp" aria-label="Firefox"><svg width="12" height="12" viewBox="0 0 12 12"><path d="M6 .500q1.500 1 2 2.300l1-.8Q12 5 11.500 7.500 10.500 12 6 12 1 12 .5 7 .5 4 2 2l1.300 1.300Q5 2.500 6 .500z" fill="#f2622b"/><path d="M7 1.500q4 3 4 6-2 1-3-3z" fill="#fbc02f"/><circle cx="6" cy="7" r="2.600" fill="#7a3fb5"/></svg></button>
 <button class="tapp" aria-label="Edge"><svg width="13" height="13" viewBox="0 0 12 12"><circle cx="6" cy="6" r="6" fill="#1f7fd0"/><path d="M.3 5Q2 0 6.500 0 11.500.500 12 5q0 3-3.500 3-2 0-1.300-1.500Q7.500 4 5 4 2 4 .3 5z" fill="#42c7a5"/><path d="M4.500 5.500Q3 9 7 11q3-.3 4-2-4 1-5-2z" fill="#0d3f80"/></svg></button>
 <button class="tapp run" aria-label="Excel"><svg width="13" height="11" viewBox="0 0 13 11"><path d="M3 0h10v11H3z" fill="#36b070"/><path d="M3 5.500h10V11H3z" fill="#1b7a45"/><path d="M0 2.500h7v6.500H0z" fill="#125c34"/><path d="M2 4l3 4M5 4L2 8" stroke="#fff"/></svg></button>
 <button class="tapp" aria-label="Fájlkezelő"><svg width="12" height="10" viewBox="0 0 12 10"><path d="M0 0h4.500l1 1.500H12V10H0z" fill="#f3c54a"/><path d="M0 3h12v7H0z" fill="#fbdc7c"/><path d="M2.500 10V6h7v4H8V7.500H4V10z" fill="#4a90c8"/></svg></button>
 <button class="tapp" aria-label="Internet Explorer"><svg width="12" height="12" viewBox="0 0 12 12"><path d="M10 8A4 4 0 1 1 10.300 6.300H3" fill="none" stroke="#67c3ee" stroke-width="2"/><path d="M.5 11Q0 8 4.500 4T11.500 1q.5.800-.5 2.500" fill="none" stroke="#f0c63a" stroke-width=".9"/></svg></button>
 <button class="tapp run" aria-label="Thunderbird"><svg width="12" height="12" viewBox="0 0 12 12"><circle cx="6.500" cy="5.800" r="5.500" fill="#2b5fb8"/><path d="M1 4q4-2 7 1l-1 5Q2 11 1 4z" fill="#f1f3f7"/><path d="M1.500 4.500l3.500 2 2.800-1.500" fill="none" stroke="#8aa"/><path d="M5 .800q5 1 5.500 6" stroke="#6aa6e8" stroke-width="1.200" fill="none"/></svg></button>
 <button class="tapp run" aria-label="Paint"><svg width="12" height="12" viewBox="0 0 12 12"><path d="M6 2q5 0 5 4.500T6 11Q4 11 4.500 9T1.500 8Q0 2 6 2z" fill="#d8e2ea"/><circle cx="3.500" cy="5" r="1" fill="#c64b3d"/><circle cx="6" cy="4" r="1" fill="#459b4a"/><circle cx="8" cy="8.500" r="1.200" fill="#3c78c4"/><path d="M11.500.500L6.500 7" stroke="#c8894e" stroke-width="1.500"/></svg></button>
 <div class="tray ms-auto d-flex align-items-center">
  <svg width="10" height="10" viewBox="0 0 10 10"><path d="M2 6.500l3-3 3 3" fill="none" stroke="#ddd"/></svg>
  <svg width="10" height="10" viewBox="0 0 10 10"><path d="M2 1l5 5-3 1zM1 9h5M6 7l3 2" stroke="#aaa" fill="none"/></svg>
  <svg width="10" height="10" viewBox="0 0 10 10"><path d="M2 3h5v5H2zM3 1h3M4 5h4" stroke="#bbb" fill="none"/></svg>
  <svg width="10" height="10" viewBox="0 0 10 10"><path d="M2 1l3 1 3 4-2 3-3-2z" fill="#e4d2bc"/><path d="M2 1l2 3" stroke="#c64b3d"/></svg>
  <svg width="10" height="10" viewBox="0 0 10 10"><path d="M3.500 1h3v2h-3zM2.500 3h5v6h-5z" stroke="#ddd" fill="none" stroke-width=".9"/></svg>
  <svg width="10" height="10" viewBox="0 0 10 10"><path d="M1 7q0-3 3-3 3-2 5 2v2H2z" fill="#8d8d8d"/><path d="M1 2l8 7" stroke="#ccc"/></svg>
  <svg width="10" height="10" viewBox="0 0 10 10"><path d="M.5.500h9v9h-9z" fill="#3b93d0"/><path d="M2 3h4M4 6h4" stroke="#a9dcf5" stroke-width="1.500"/></svg>
  <svg width="10" height="10" viewBox="0 0 10 10"><path d="M1 3l5-2 4 2v5L5 9 1 7z" fill="#4ba3df"/><path d="M1 6l5-2-1 5z" fill="#e7f3fb"/></svg>
  <svg width="10" height="10" viewBox="0 0 10 10"><path d="M1 3l2.500 4L6 3M4 3l2 4 3-4" stroke="#38a0c8" fill="none" stroke-width="1.300"/></svg>
  <svg width="10" height="10" viewBox="0 0 10 10"><circle cx="5" cy="5" r="4" fill="#f2bd2c"/><circle cx="5" cy="5" r="1.700" fill="#8a5c10"/></svg>
  <svg width="10" height="10" viewBox="0 0 10 10"><path d="M2.500 2H9v5H2.500zM5.500 7v2M4 9h4M1 1v4" stroke="#ddd" fill="none" stroke-width=".9"/></svg>
  <svg width="10" height="10" viewBox="0 0 10 10"><path d="M1 1.500L5 .500l3.500 1V5Q8 8 5 9 1 8 1 5z" fill="#fff"/><path d="M5 1v8M1 4.500h7.500" stroke="#222"/><path d="M7 5l3 5H4z" fill="#f2bd2c"/></svg>
  <svg width="10" height="10" viewBox="0 0 10 10"><path d="M.5.500h9v9h-9z" fill="#e3782c"/><path d="M3 8h4L5.500 5V2h-1v3z" fill="none" stroke="#fff" stroke-width=".8"/></svg>
 </div>
 <div class="clock">11:06<br>2022. 01. 06.</div>
 <button class="notif" aria-label="Értesítések"><svg width="14" height="13" viewBox="0 0 14 13"><path d="M1 1h8v7H4L2.500 10V8H1z" fill="#fff"/><path d="M2.500 3h5M2.500 5h5" stroke="#555" stroke-width=".8"/><circle cx="9.500" cy="8.500" r="4" fill="#333" stroke="#999" stroke-width=".7"/><path d="M8.200 7.500q1.300-1.500 2.300 0 0 .8-2.300 3h2.600" fill="none" stroke="#fff" stroke-width=".8"/></svg></button>
 <span class="peek"></span>
</div>
</body>
</html>
